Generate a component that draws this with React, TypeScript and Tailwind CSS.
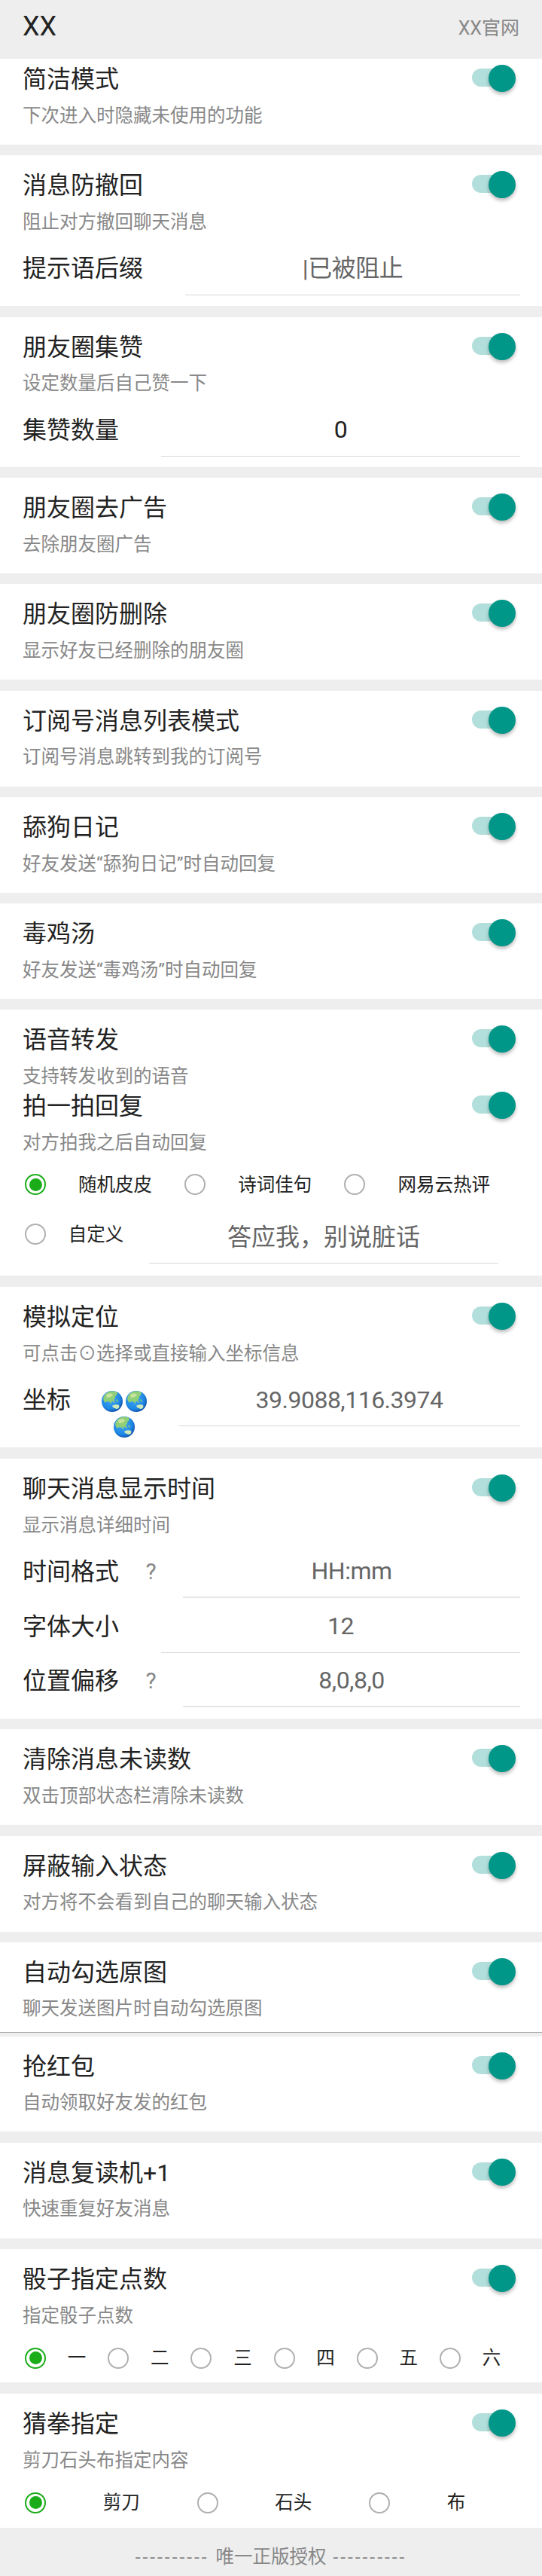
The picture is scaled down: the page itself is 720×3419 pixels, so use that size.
import React from "react";

const FONT = "[font-family:Roboto,'Noto_Sans_CJK_SC',sans-serif]";

function Toggle() {
  return (
    <div className="relative h-9 w-[58px] shrink-0">
      <div className="absolute left-0 top-[5px] h-6 w-[54px] rounded-full bg-[#b2dfdb]" />
      <div className="absolute right-0 top-0 h-9 w-9 rounded-full bg-[#009688] shadow-[0_3px_5px_rgba(0,0,0,0.28)]" />
    </div>
  );
}

function Head({ title, sub, compact }: { title: string; sub: React.ReactNode; compact?: boolean }) {
  return (
    <>
      <div className="flex h-12 items-center justify-between pl-[30px] pr-[35px]">
        <div className="pt-[3px] text-[32px] leading-[45px] text-[#222222]">{title}</div>
        <Toggle />
      </div>
      {compact ? (
        <div className="mt-[10px] flex h-[30px] items-center pl-[30px] pt-[2px] text-[24.5px] text-[#888888]">{sub}</div>
      ) : (
        <div className="flex h-[50px] items-center pl-[30px] pt-[2px] text-[24.5px] text-[#888888]">{sub}</div>
      )}
    </>
  );
}

function Card({ children, className }: { children: React.ReactNode; className: string }) {
  return <section className={"bg-white " + className}>{children}</section>;
}

function Simple({ title, sub }: { title: string; sub: React.ReactNode }) {
  return (
    <Card className="mt-[14.3px] pt-[15px] pb-[14px]">
      <Head title={title} sub={sub} />
    </Card>
  );
}

function Field({
  label,
  value,
  slot,
  dark,
  inputClass = "ml-[56px]",
  line = "border-b border-[#d8d8d8]",
}: {
  label: string;
  value: string;
  slot?: React.ReactNode;
  dark?: boolean;
  inputClass?: string;
  line?: string;
}) {
  return (
    <div className="flex h-[72.5px] items-stretch pl-[30px] pr-[29px]">
      <div className="flex items-center pt-[2px] text-[32px] text-[#222222]">{label}</div>
      {slot}
      <div
        className={
          "flex flex-1 items-center justify-center pt-[2px] text-[32px] tracking-[-0.5px] " +
          (dark ? "text-[#222222] " : "text-[#666666] ") +
          line +
          " " +
          inputClass
        }
      >
        {value}
      </div>
    </div>
  );
}

function Radio({ on }: { on?: boolean }) {
  return on ? (
    <span className="flex h-7 w-7 shrink-0 items-center justify-center rounded-full border-2 border-[#1aad19]">
      <span className="h-[17px] w-[17px] rounded-full bg-[#1aad19]" />
    </span>
  ) : (
    <span className="h-7 w-7 shrink-0 rounded-full border-2 border-[#b0b0b0]" />
  );
}

function RadioRow({ items, height }: { items: string[]; height: string }) {
  return (
    <div className={"flex items-center pl-[33px] pr-[26px] " + height}>
      {items.map((t, i) => (
        <div key={t} className="flex flex-auto items-center">
          <Radio on={i === 0} />
          <span className="flex-1 pt-[1px] text-center text-[24.5px] text-[#222222]">{t}</span>
        </div>
      ))}
    </div>
  );
}

function Globe() {
  return (
    <svg width="28" height="28" viewBox="0 0 28 28" className="shrink-0">
      <defs>
        <radialGradient id="gb" cx="42%" cy="40%" r="65%">
          <stop offset="0%" stopColor="#42a5f5" />
          <stop offset="70%" stopColor="#1e88e5" />
          <stop offset="100%" stopColor="#0d47a1" />
        </radialGradient>
        <clipPath id="gc">
          <circle cx="14" cy="14" r="14" />
        </clipPath>
      </defs>
      <circle cx="14" cy="14" r="14" fill="url(#gb)" />
      <g clipPath="url(#gc)">
        <path
          d="M3 7 C6 2 12 -1 19 1 C22 3 21 6 18 7 C19 9 17 11 16 12 C17 14 19 15 18 16 C16 15 14 13 13 14 C14 17 12 18 11 15 C9 14 6 14 5 16 C3 14 1 11 3 7 Z"
          fill="#8fcf7a"
        />
        <path d="M6 5 C9 3 13 3 15 5 C14 8 10 9 7 9 Z" fill="#c8e39a" />
        <path d="M14 20 C16 18 21 18 23 19 C24 21 23 24 20 24 C18 23 15 23 14 20 Z" fill="#cfe8b8" />
        <path d="M19 11 l2 1 l1 3 l-2 -1 Z" fill="#8fcf7a" />
      </g>
    </svg>
  );
}

const Hint = () => (
  <div className="flex w-[85px] items-center justify-center text-[30px] text-[#888888]">?</div>
);

export default function App() {
  return (
    <div className={"h-[3419px] w-[720px] overflow-hidden bg-[#eeeeee] " + FONT}>
      <header className="flex h-[78px] justify-between pl-[30px] pr-[30px]">
        <div className="pt-[13px] text-[36px] leading-[44px] text-[#222222]">XX</div>
        <div className="pt-[23px] text-[25px] leading-[30px] text-[#888888]">XX官网</div>
      </header>

      <Card className="pt-[2px] pb-[14px]">
        <Head title="简洁模式" sub="下次进入时隐藏未使用的功能" />
      </Card>

      <Card className="mt-[14px] pt-[15px] pb-[14.5px]">
        <Head title="消息防撤回" sub="阻止对方撤回聊天消息" />
        <Field label="提示语后缀" value="|已被阻止" />
      </Card>

      <Card className="mt-[14.5px] pt-[15px] pb-[13.7px]">
        <Head title="朋友圈集赞" sub="设定数量后自己赞一下" />
        <Field label="集赞数量" value="0" dark />
      </Card>

      <Simple title="朋友圈去广告" sub="去除朋友圈广告" />
      <Simple title="朋友圈防删除" sub="显示好友已经删除的朋友圈" />
      <Simple title="订阅号消息列表模式" sub="订阅号消息跳转到我的订阅号" />
      <Simple title="舔狗日记" sub="好友发送“舔狗日记”时自动回复" />
      <Simple title="毒鸡汤" sub="好友发送“毒鸡汤”时自动回复" />

      <Card className="mt-[14.3px] pt-[15px] pb-[16px]">
        <Head title="语音转发" sub="支持转发收到的语音" compact />
        <Head title="拍一拍回复" sub="对方拍我之后自动回复" />
        <RadioRow items={["随机皮皮", "诗词佳句", "网易云热评"]} height="h-[62px]" />
        <div className="mt-[2px] flex h-[72px] items-stretch pl-[33px] pr-[58px]">
          <div className="flex items-center pb-[6px]">
            <Radio />
            <span className="w-[137px] pr-[4px] pt-[1px] text-center text-[24.5px] text-[#222222]">自定义</span>
          </div>
          <div className="flex flex-1 items-center justify-center border-b border-[#d8d8d8] pt-[2px] text-[32px] text-[#666666]">
            答应我，别说脏话
          </div>
        </div>
      </Card>

      <Card className="mt-[14.5px] pt-[15px] pb-[27.5px]">
        <Head title="模拟定位" sub="可点击⊙选择或直接输入坐标信息" />
        <Field
          label="坐标"
          value="39.9088,116.3974"
          inputClass=""
          slot={
            <div className="w-[143px] pl-[41px] pt-[25px]">
              <div className="flex w-[60px] flex-wrap justify-center gap-x-[4px] gap-y-[6px]">
                <Globe />
                <Globe />
                <Globe />
              </div>
            </div>
          }
        />
      </Card>

      <Card className="mt-[15px] pt-[15px] pb-[14.5px]">
        <Head title="聊天消息显示时间" sub="显示消息详细时间" />
        <Field label="时间格式" value="HH:mm" inputClass="" line="border-b-2 border-[#e6e6e6]" slot={<Hint />} />
        <Field label="字体大小" value="12" />
        <Field label="位置偏移" value="8,0,8,0" inputClass="" line="border-b-2 border-[#e6e6e6]" slot={<Hint />} />
      </Card>

      <Simple title="清除消息未读数" sub="双击顶部状态栏清除未读数" />
      <Simple title="屏蔽输入状态" sub="对方将不会看到自己的聊天输入状态" />

      <Card className="mt-[14.3px] border-b border-[#aaaaaa] pt-[15px] pb-[6px]">
        <Head title="自动勾选原图" sub="聊天发送图片时自动勾选原图" />
      </Card>
      <Card className="mt-[5px] pt-[15px] pb-[13.4px]">
        <Head title="抢红包" sub="自动领取好友发的红包" />
      </Card>

      <Simple title="消息复读机+1" sub="快速重复好友消息" />

      <Card className="mt-[14.4px] pt-[15px]">
        <Head title="骰子指定点数" sub="指定骰子点数" />
        <RadioRow items={["一", "二", "三", "四", "五", "六"]} height="h-[64px]" />
      </Card>

      <Card className="mt-[15px] pt-[15px] pb-[1px]">
        <Head title="猜拳指定" sub="剪刀石头布指定内容" />
        <RadioRow items={["剪刀", "石头", "布"]} height="h-[64px]" />
      </Card>

      <footer className="flex h-[64px] justify-center pt-[24px] text-[24.5px] leading-[30px] text-[#888888]">
        <span className="tracking-[3px]">----------</span>
        <span className="px-[9px]">唯一正版授权</span>
        <span className="tracking-[3px]">----------</span>
      </footer>
    </div>
  );
}
